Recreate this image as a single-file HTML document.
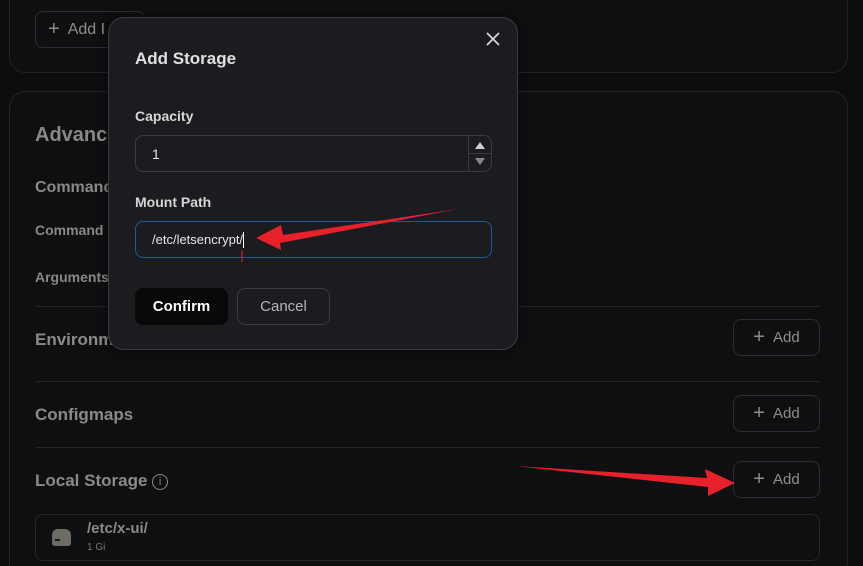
<!DOCTYPE html>
<html><head><meta charset="utf-8"><style>
*{box-sizing:border-box;margin:0;padding:0}
html,body{width:863px;height:566px;overflow:hidden;background:#0c0d0e}
#root{position:relative;width:863px;height:566px;overflow:hidden;font-family:"Liberation Sans",sans-serif;color:#8a8a8a}
.card{position:absolute;left:9px;right:15px;border:1px solid #222325;border-radius:16px;background:#0e0f10}
.abs{position:absolute}
.btn{position:absolute;border:1px solid #2c2d30;border-radius:8px;color:#8d8d8d;font-size:15px;display:flex;align-items:center;justify-content:center;gap:8px}
.line{position:absolute;left:35px;width:785px;height:1px;background:#222325}
.lbl{position:absolute;left:35px;font-size:17px;color:#8a8a8a;font-weight:bold}
.modal{position:absolute;left:108px;top:17px;width:410px;height:333px;background:#1b1c1f;border:1px solid #3b3c3f;border-radius:16px;box-shadow:0 0 8px rgba(0,0,0,.6)}
.input{position:absolute;left:26px;width:357px;height:37px;border:1px solid #3a3b3e;border-radius:8px;background:#1b1c1f;color:#e6e6e6;font-size:14px;padding-left:16px;display:flex;align-items:center}
</style></head><body><div id="root">
<div class="card" style="top:0;height:73px;border-top:none;border-radius:0 0 16px 16px"></div>
<div class="btn" style="left:35px;top:11px;width:110px;height:37px;justify-content:flex-start;padding-left:12px;font-size:16px"><span style="font-size:20px">+</span> Add I</div>
<div class="card" style="top:91px;height:475px;border-bottom:none;border-radius:16px 16px 0 0"></div>
<div class="abs" style="left:35px;top:124px;font-size:20px;font-weight:bold;color:#888">Advanced</div>
<div class="lbl" style="top:179px;font-size:16px">Command</div>
<div class="abs" style="left:35px;top:222px;font-size:14px;font-weight:bold;color:#888">Command</div>
<div class="abs" style="left:35px;top:269px;font-size:14px;font-weight:bold;color:#888">Arguments</div>
<div class="line" style="top:306px"></div>
<div class="lbl" style="top:330px">Environment</div>
<div class="btn" style="left:733px;top:319px;width:87px;height:37px"><span style="font-size:20px">+</span> Add</div>
<div class="line" style="top:381px"></div>
<div class="lbl" style="top:405px">Configmaps</div>
<div class="btn" style="left:733px;top:395px;width:87px;height:37px"><span style="font-size:20px">+</span> Add</div>
<div class="line" style="top:447px"></div>
<div class="lbl" style="top:471px">Local Storage <span style="display:inline-block;width:16px;height:16px;border:1px solid #888;border-radius:50%;font-size:11px;text-align:center;line-height:14px;vertical-align:1px;font-weight:normal">i</span></div>
<div class="btn" style="left:733px;top:461px;width:87px;height:37px"><span style="font-size:20px">+</span> Add</div>
<div class="abs" style="left:35px;top:514px;width:785px;height:47px;border:1px solid #262729;border-radius:8px"></div>
<div class="abs" style="left:52px;top:529px;width:19px;height:17px;background:#6e6a66;border-radius:6px 6px 3px 3px"><div style="position:absolute;left:3px;top:10px;width:5px;height:2px;background:#1a1a1a"></div></div>
<div class="abs" style="left:87px;top:520px;font-size:15px;color:#8a8a8a;font-weight:bold">/etc/x-ui/</div>
<div class="abs" style="left:87px;top:542px;font-size:10px;color:#777">1 Gi</div>

<div class="modal">
<svg class="abs" style="right:17px;top:14px" width="14" height="14"><path d="M1 1L13 13M13 1L1 13" stroke="#ddd" stroke-width="1.6"/></svg>
<div class="abs" style="left:26px;top:31px;font-size:17px;font-weight:bold;color:#e0e0e0">Add Storage</div>
<div class="abs" style="left:26px;top:90px;font-size:14px;font-weight:bold;color:#d5d5d5">Capacity</div>
<div class="input" style="top:117px">1
<div style="position:absolute;right:0;top:0;width:23px;height:35px;border-left:1px solid #3a3b3e">
<div style="position:absolute;left:6px;top:6px;border:5px solid transparent;border-bottom:7px solid #ccc;border-top:0"></div>
<div style="position:absolute;left:0;top:17px;width:23px;height:1px;background:#3a3b3e"></div>
<div style="position:absolute;left:6px;top:22px;border:5px solid transparent;border-top:7px solid #888;border-bottom:0"></div>
</div></div>
<div class="abs" style="left:26px;top:176px;font-size:14px;font-weight:bold;color:#d5d5d5">Mount Path</div>
<div class="input" style="top:203px;border-color:#1d5a99;font-size:13px">/etc/letsencrypt/<span style="display:inline-block;width:1px;height:16px;background:#fff"></span></div>
<div class="abs" style="left:26px;top:270px;width:93px;height:37px;background:#080808;border-radius:8px;color:#fff;font-weight:bold;font-size:15px;display:flex;align-items:center;justify-content:center">Confirm</div>
<div class="abs" style="left:128px;top:270px;width:93px;height:37px;border:1px solid #3a3b3e;border-radius:8px;color:#b5b5b5;font-size:15px;display:flex;align-items:center;justify-content:center">Cancel</div>
</div>

<svg class="abs" style="left:0;top:0" width="863" height="566">
<polygon points="458,209 283,235 281,225 256,238 281,250 280,243" fill="#e8202a"/>
<line x1="242" y1="250" x2="242" y2="262" stroke="#e8202a" stroke-width="1"/>
<polygon points="515,466 707,478 705,469 735,483 708,496 708,487" fill="#e8202a"/>
</svg>
</div></body></html>
